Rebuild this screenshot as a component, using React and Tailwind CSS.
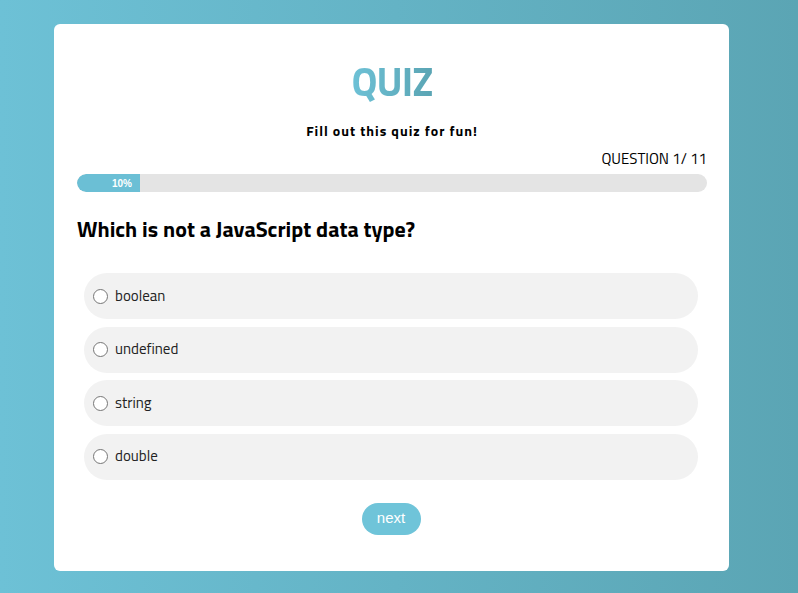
import React, { useState } from 'react';

const options = ['boolean', 'undefined', 'string', 'double'];

const font = { fontFamily: '"Titillium Web", "Open Sans", sans-serif' };

const App = () => {
  const [selected, setSelected] = useState(null);

  return (
    <div className="min-h-screen bg-gradient-to-r from-[#6dc1d6] to-[#5ba5b4] pt-6 pb-[22px] text-[#222]" style={font}>
      <div className="bg-white rounded-md h-[547px] w-[675px] ml-[54px] pl-[23px] pr-[22px] pt-[34px] flex flex-col">
        <h1 className="text-center text-[40px] leading-[48px] font-bold tracking-tight">
          <span className="bg-gradient-to-r from-[#6dc1d6] to-[#5ba5b4] bg-clip-text text-transparent">QUIZ</span>
        </h1>
        <p className="text-center text-[14px] leading-[20px] font-bold text-black mt-[15px] tracking-[1px]">Fill out this quiz for fun!</p>
        <div className="text-right text-[15px] leading-[20px] text-black mt-[8px]">QUESTION 1/ 11</div>
        <div className="h-[18px] rounded-full bg-[#e4e4e4] mt-[5px] overflow-hidden">
          <div className="h-full w-[10%] bg-[#6bbfd5] rounded-l-full flex items-center justify-end pr-[8px]">
            <span className="text-[10px] font-bold text-white" style={{ fontFamily: '"Liberation Sans", Arial, sans-serif' }}>10%</span>
          </div>
        </div>
        <h2 className="text-[22px] font-bold text-black mt-[23px] leading-[28px]">Which is not a JavaScript data type?</h2>
        <div className="flex flex-col gap-[7.5px] mt-[30px] pl-[7px] pr-[9px]">
          {options.map((opt, i) => (
            <label key={opt} className="h-[46px] rounded-full bg-[#f2f2f2] flex items-center pl-[9px] gap-[7px] cursor-pointer">
              <span className="w-[15px] h-[15px] rounded-full border border-[#767676] bg-white flex items-center justify-center">
                {selected === i && <span className="w-[9px] h-[9px] rounded-full bg-[#0075ff]" />}
              </span>
              <input type="radio" name="q" className="hidden" checked={selected === i} onChange={() => setSelected(i)} />
              <span className="text-[15px] text-[#222]">{opt}</span>
            </label>
          ))}
        </div>
        <div className="flex justify-center mt-[23px]">
          <button className="h-[32px] w-[59px] -ml-[2px] rounded-full bg-[#6fc4d9] text-white text-[15px]" style={{ fontFamily: '"Liberation Sans", Arial, sans-serif' }}>
            next
          </button>
        </div>
      </div>
    </div>
  );
};

export default App;
